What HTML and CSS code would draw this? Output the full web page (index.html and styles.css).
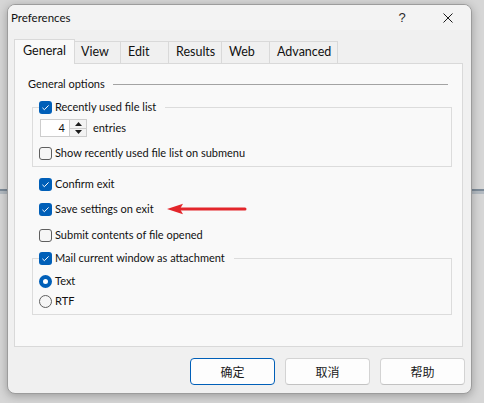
FILE: index.html
```html
<!DOCTYPE html>
<html>
<head>
<meta charset="utf-8">
<title>Preferences</title>
<link rel="stylesheet" href="styles.css">
</head>
<body>
<div class="window">
  <div class="titlebar">
    <span class="title">Preferences</span>
    <span class="tb-btn tb-help">?</span>
    <span class="tb-btn tb-close">
      <svg width="10" height="10" viewBox="0 0 10 10"><path d="M0.5 0.5 L9.5 9.5 M9.5 0.5 L0.5 9.5" stroke="#1b1b1b" stroke-width="1" fill="none"/></svg>
    </span>
  </div>
  <div class="content">
    <div class="tabs">
      <div class="tab tab-active tab-general">General</div>
      <div class="tab tab-view">View</div>
      <div class="tab tab-edit">Edit</div>
      <div class="tab tab-results">Results</div>
      <div class="tab tab-web">Web</div>
      <div class="tab tab-advanced">Advanced</div>
    </div>
    <div class="panel">
      <div class="section-head"><span>General options</span><span class="rule"></span></div>

      <div class="group group-recent">
        <div class="legend">
          <span class="box checked"><svg width="13" height="13" viewBox="0 0 13 13"><path d="M3.4 6.8 L5.4 8.7 L9.6 4.4" stroke="#fff" stroke-width="1" fill="none"/></svg></span>
          <span>Recently used file list</span>
        </div>
        <div class="spin-row">
          <div class="spin">
            <span class="spin-val">4</span>
            <div class="spin-btns">
              <span class="spin-up"><svg width="7" height="4" viewBox="0 0 7 4"><path d="M3.5 0 L7 4 L0 4 Z" fill="#1b1b1b"/></svg></span>
              <span class="spin-down"><svg width="7" height="4" viewBox="0 0 7 4"><path d="M0 0 L7 0 L3.5 4 Z" fill="#1b1b1b"/></svg></span>
            </div>
          </div>
          <span class="spin-label">entries</span>
        </div>
        <div class="row row-show">
          <span class="box"></span>
          <span>Show recently used file list on submenu</span>
        </div>
      </div>

      <div class="row row-top row-confirm">
        <span class="box checked"><svg width="13" height="13" viewBox="0 0 13 13"><path d="M3.4 6.8 L5.4 8.7 L9.6 4.4" stroke="#fff" stroke-width="1" fill="none"/></svg></span>
        <span>Confirm exit</span>
      </div>
      <div class="row row-top row-save">
        <span class="box checked"><svg width="13" height="13" viewBox="0 0 13 13"><path d="M3.4 6.8 L5.4 8.7 L9.6 4.4" stroke="#fff" stroke-width="1" fill="none"/></svg></span>
        <span>Save settings on exit</span>
        <svg class="arrow" width="80" height="12" viewBox="0 0 80 12"><path d="M12 6 L78 6" stroke="#e3262b" stroke-width="3" stroke-linecap="round"/><path d="M0 6 L16 0.8 L13 6 L16 11.2 Z" fill="#e3262b"/></svg>
      </div>
      <div class="row row-top row-submit">
        <span class="box"></span>
        <span>Submit contents of file opened</span>
      </div>

      <div class="group group-mail">
        <div class="legend">
          <span class="box checked"><svg width="13" height="13" viewBox="0 0 13 13"><path d="M3.4 6.8 L5.4 8.7 L9.6 4.4" stroke="#fff" stroke-width="1" fill="none"/></svg></span>
          <span>Mail current window as attachment</span>
        </div>
        <div class="row row-text">
          <span class="radio checked"></span>
          <span>Text</span>
        </div>
        <div class="row row-rtf">
          <span class="radio"></span>
          <span>RTF</span>
        </div>
      </div>
    </div>
    <div class="buttons">
      <div class="btn btn-default">确定</div>
      <div class="btn">取消</div>
      <div class="btn">帮助</div>
    </div>
  </div>
</div>
</body>
</html>
```
FILE: styles.css
```css
html, body {
  margin: 0;
  padding: 0;
}
body {
  width: 484px;
  height: 403px;
  overflow: hidden;
  background: linear-gradient(to bottom, #d6d6d6 0, #d6d6d6 189px, #7d8b98 189px, #7d8b98 191px, #b3bac1 191px, #b3bac1 194px, #d6d6d6 194px);
  font-family: "Lato", "Liberation Sans", sans-serif;
  font-size: 12px;
  color: #111111;
}
.window {
  position: relative;
  top: 4px;
  left: 7px;
  width: 465px;
  height: 390px;
  box-sizing: border-box;
  border: 1px solid #9c9c9c;
  border-radius: 8px;
  background: #f0f0f0;
  box-shadow: 0 2px 10px rgba(0, 0, 0, 0.28);
  overflow: hidden;
  display: flex;
  flex-direction: column;
}
.titlebar {
  height: 25px;
  flex: none;
  background: #f3f3f3;
  display: flex;
  align-items: center;
  padding-left: 3px;
}
.title {
  font-size: 11.5px;
  line-height: 16px;
}
.tb-btn {
  width: 46px;
  height: 25px;
  display: flex;
  align-items: center;
  justify-content: center;
  font-family: "Liberation Sans", sans-serif;
  font-size: 13px;
  color: #2a2a2a;
}
.tb-help {
  margin-left: auto;
}
.content {
  padding: 9px 8px 0 6px;
  display: flex;
  flex-direction: column;
}
.tabs {
  display: flex;
  align-items: flex-end;
  height: 24px;
  font-size: 12.5px;
}
.tab {
  box-sizing: border-box;
  height: 22px;
  border: 1px solid #d9d9d9;
  border-bottom: none;
  background: #f0f0f0;
  padding-left: 6px;
  line-height: 20px;
  margin-left: -1px;
  white-space: nowrap;
}
.tab-active {
  height: 25px;
  margin-left: 0;
  margin-bottom: -1px;
  padding-left: 8px;
  padding-top: 1px;
  background: #f9f9f9;
  position: relative;
  z-index: 1;
}
.tab-general { width: 61px; }
.tab-view { width: 47px; }
.tab-edit { width: 49px; padding-left: 7px; }
.tab-results { width: 54px; padding-left: 7px; }
.tab-web { width: 49px; padding-left: 7px; }
.tab-advanced { width: 69px; padding-left: 7px; }

.panel {
  box-sizing: border-box;
  width: 449px;
  height: 284px;
  border: 1px solid #d9d9d9;
  background: #f9f9f9;
  padding: 12px 10px 0 13px;
  display: flex;
  flex-direction: column;
  font-size: 11px;
}
.section-head {
  display: flex;
  align-items: center;
  height: 16px;
  line-height: 16px;
  padding-right: 4px;
}
.rule {
  flex: 1;
  height: 1px;
  background: #a3a3a3;
  margin-left: 8px;
}
.group {
  margin-left: 4px;
  border: 1px solid #dcdcdc;
  padding: 0 0 5px 6px;
  display: flex;
  flex-direction: column;
}
.group-recent { margin-top: 15px; }
.group-mail { margin-top: 15px; }
.legend {
  margin-top: -9px;
  height: 16px;
  width: fit-content;
  display: flex;
  align-items: center;
  background: #f9f9f9;
  padding-right: 9px;
  line-height: 16px;
}
.row {
  display: flex;
  align-items: center;
  height: 16px;
  line-height: 16px;
}
.row-top { margin-left: 11px; }
.row-confirm { margin-top: 9px; }
.row-save { margin-top: 9px; }
.row-submit { margin-top: 10px; }
.row-show { margin-top: 8px; }
.row-text { margin-top: 7px; }
.row-rtf { margin-top: 4px; }

.box {
  box-sizing: border-box;
  width: 13px;
  height: 13px;
  flex: none;
  border: 1px solid #5f5f5f;
  border-radius: 3px;
  background: #f6f6f6;
  margin-right: 3px;
  display: flex;
}
.box.checked {
  border: none;
  background: #005fb8;
}
.radio {
  box-sizing: border-box;
  width: 13px;
  height: 13px;
  flex: none;
  border: 1px solid #5f5f5f;
  border-radius: 50%;
  background: #f6f6f6;
  margin-right: 3px;
}
.radio.checked {
  border: 4px solid #005fb8;
  background: #ffffff;
}
.arrow {
  margin-left: 13px;
  flex: none;
}

.spin-row {
  margin-top: 4px;
  display: flex;
  align-items: center;
  height: 18px;
}
.spin {
  box-sizing: border-box;
  margin-left: 1px;
  width: 47px;
  height: 18px;
  border: 1px solid #cdcdcd;
  background: #ffffff;
  display: flex;
}
.spin-val {
  flex: 1;
  text-align: right;
  padding-right: 4px;
  line-height: 16px;
}
.spin-btns {
  width: 16px;
  display: flex;
  flex-direction: column;
  border-left: 1px solid #cdcdcd;
}
.spin-up, .spin-down {
  flex: 1;
  display: flex;
  align-items: center;
  justify-content: center;
  background: #f3f3f3;
}
.spin-up {
  border-bottom: 1px solid #cdcdcd;
}
.spin-label {
  margin-left: 6px;
  line-height: 16px;
}

.buttons {
  margin-top: 11px;
  margin-right: -2px;
  display: flex;
  justify-content: flex-end;
  gap: 10px;
}
.btn {
  box-sizing: border-box;
  width: 85px;
  height: 27px;
  border: 1px solid #d3d3d3;
  border-bottom-color: #c2c2c2;
  border-radius: 4px;
  background: #fdfdfd;
  display: flex;
  align-items: center;
  justify-content: center;
  font-family: "Noto Sans CJK SC", sans-serif;
  font-size: 12px;
  color: #1a1a1a;
}
.btn-default {
  border: 1px solid #005fb8;
}
```
